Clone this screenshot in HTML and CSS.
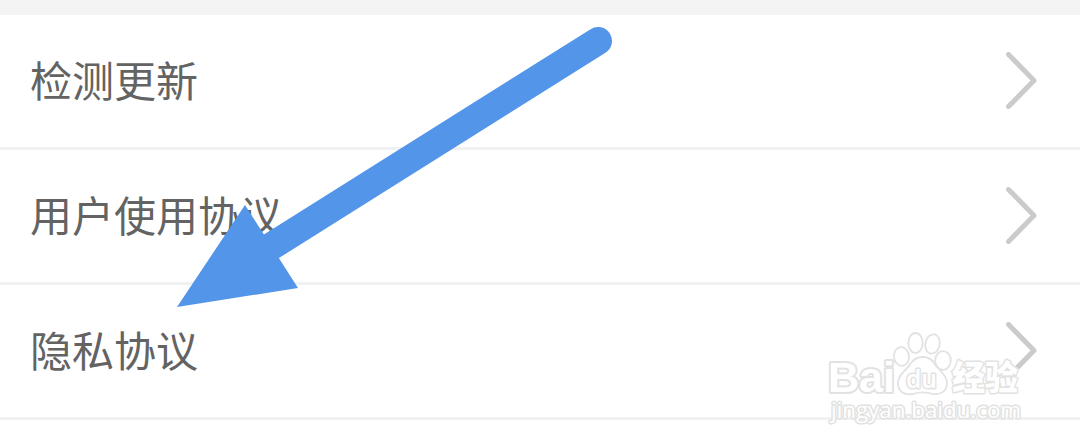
FILE: index.html
```html
<!DOCTYPE html>
<html lang="zh-CN">
<head>
    <meta charset="UTF-8">
    <meta name="viewport" content="width=device-width, initial-scale=1.0">
    <title>隐私协议</title>
    <link rel="stylesheet" href="styles.css">
</head>
<body>
    <div class="container">
        <ul class="menu">
            <li class="menu-item">
                <span>检测更新</span>
                <svg class="chevron" viewBox="0 0 31 57"><path d="M2.5 2.5 L28 28.5 L2.5 54.5"/></svg>
            </li>
            <li class="menu-item">
                <span>用户使用协议</span>
                <svg class="chevron" viewBox="0 0 31 57"><path d="M2.5 2.5 L28 28.5 L2.5 54.5"/></svg>
            </li>
            <li class="menu-item">
                <span>隐私协议</span>
                <svg class="chevron" viewBox="0 0 31 57"><path d="M2.5 2.5 L28 28.5 L2.5 54.5"/></svg>
            </li>
        </ul>

        <svg class="arrow" viewBox="0 0 436 282">
            <path class="arrow-line" d="M421 16 L90 224"/>
            <path class="arrow-head" d="M0 282 L68 180 L121 263 Z"/>
        </svg>

        <svg class="watermark" viewBox="0 0 204 100">
            <g class="paw">
                <ellipse cx="81.5" cy="28.5" rx="7.5" ry="9.5" transform="rotate(-8 81.5 28.5)"/>
                <ellipse cx="95.5" cy="15" rx="7.2" ry="10"/>
                <ellipse cx="112.5" cy="16" rx="7.2" ry="9.8" transform="rotate(12 112.5 16)"/>
                <ellipse cx="123" cy="32.5" rx="7.8" ry="9.3"/>
                <path d="M91 35 C97 27 109 27 114 35 C117 41 127 46 127 55 C127 63 121 67 113 66 C106 64 99 64 93 66 C84 68 78 63 78 55 C78 46 87 42 91 35 Z"/>
            </g>
            <text class="logo" x="8" y="64" textLength="67" lengthAdjust="spacingAndGlyphs">Bai</text>
            <text class="logo-du" x="86" y="60" textLength="31" lengthAdjust="spacingAndGlyphs">du</text>
            <text class="logo-cn" x="132" y="62" textLength="66" lengthAdjust="spacingAndGlyphs">经验</text>
            <text class="site" x="11" y="90" textLength="190" lengthAdjust="spacingAndGlyphs">jingyan.baidu.com</text>
        </svg>
    </div>
</body>
</html>
```
FILE: styles.css
```css
body {
    font-family: "Noto Sans CJK SC", sans-serif;
    margin: 0;
    padding: 0;
    background-color: #fff;
}

.container {
    position: relative;
    height: 448px;
    overflow: hidden;
}

.menu {
    list-style: none;
    margin: 0;
    padding: 0;
    border-top: 15px solid #f4f4f4;
}

.menu-item {
    display: flex;
    justify-content: space-between;
    align-items: center;
    height: 132px;
    padding: 0 43px 0 30px;
    border-bottom: 3px solid #f0f1f3;
    font-size: 42px;
    line-height: 60px;
    color: #636363;
}

.menu-item span {
    padding-bottom: 4px;
}

.chevron {
    width: 31px;
    height: 57px;
    margin-bottom: 1px;
    fill: none;
    stroke: #cbcbcb;
    stroke-width: 5;
    stroke-linecap: round;
    stroke-linejoin: round;
}

/* arrow pointing at the last item */
.arrow {
    position: absolute;
    left: 177px;
    top: 25px;
    width: 436px;
    height: 282px;
}

.arrow-line {
    stroke: #5295e9;
    stroke-width: 28;
    stroke-linecap: round;
}

.arrow-head {
    fill: #5295e9;
}

.watermark {
    position: absolute;
    left: 820px;
    top: 328px;
    width: 204px;
    height: 100px;
    overflow: visible;
    fill: #fff;
    stroke: #e2e2e2;
    stroke-width: 1.8;
    stroke-linejoin: round;
}

.watermark text {
    paint-order: stroke;
    stroke-width: 3;
}

.watermark .logo {
    font-family: "Liberation Sans", sans-serif;
    font-size: 43px;
    font-weight: bold;
    stroke-width: 4;
}

.logo-du {
    font-family: "Open Sans", sans-serif;
    font-size: 25px;
    font-weight: 600;
}

.logo-cn {
    font-size: 34px;
    font-weight: 900;
}

.site {
    font-family: "Open Sans", sans-serif;
    font-size: 21px;
}
```
